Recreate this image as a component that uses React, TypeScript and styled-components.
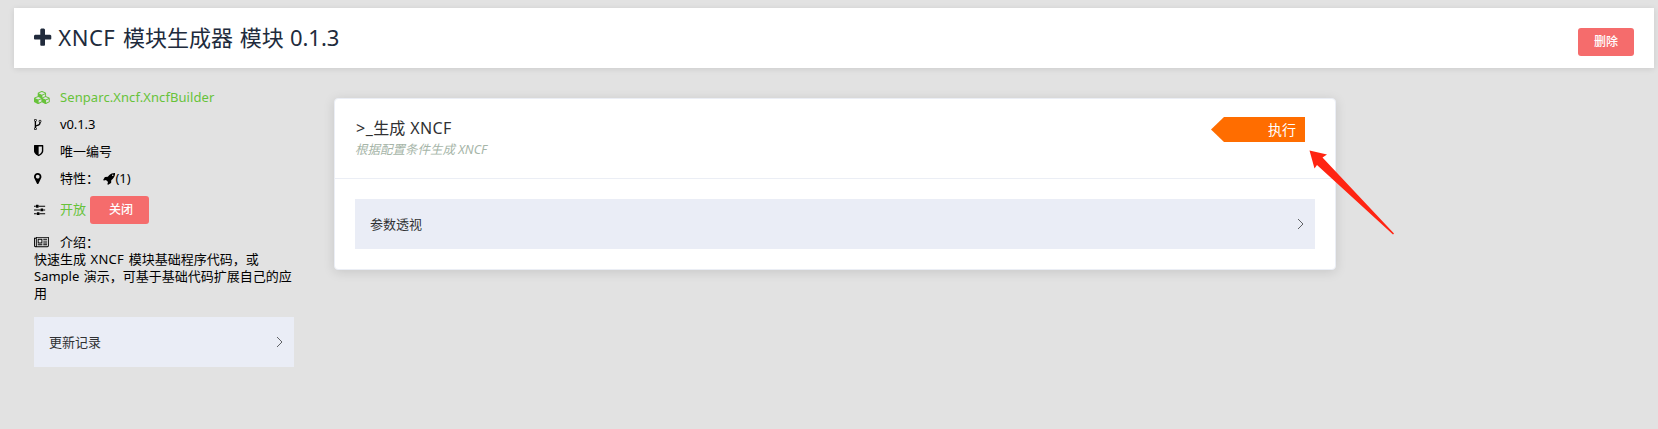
import React from "react";
import styled, { createGlobalStyle } from "styled-components";

const GlobalStyle = createGlobalStyle`
  * { box-sizing: border-box; }
  body {
    margin: 0;
    background: #e2e2e2;
    color: #000;
    font: 13px/17px "Noto Sans", "Noto Sans CJK SC", sans-serif;
  }
`;

const Page = styled.div`
  min-height: 429px;
  padding: 8px 4px 0 14px;
  overflow: hidden;
`;

const Header = styled.header`
  display: flex;
  justify-content: space-between;
  height: 60px;
  padding: 0 20px;
  background: #fff;
  box-shadow: 0 1px 6px rgba(0, 0, 0, 0.1);
`;

const Title = styled.h1`
  display: flex;
  align-items: center;
  gap: 7px;
  height: 58px;
  margin: 0;
  color: #212b3c;
  font-size: 22px;
  line-height: 30px;
  font-weight: 400;
  white-space: pre;
  word-spacing: 1px;

  svg {
    margin-top: 2px;
  }
`;

const Latin = styled.span<{ $track: number; $gap?: number }>`
  letter-spacing: ${(p) => p.$track}px;
  word-spacing: ${(p) => p.$gap ?? 0}px;
`;

const Button = styled.button<{ $pad: string }>`
  height: 28px;
  padding: ${(p) => p.$pad};
  border: 0;
  border-radius: 3px;
  background: #f56c6c;
  color: #fff;
  font: 500 12px/26px "Noto Sans", "Noto Sans CJK SC", sans-serif;
`;

const DeleteButton = styled(Button)`
  margin-top: 20px;
`;

const Body = styled.div`
  display: flex;
  align-items: flex-start;
  gap: 40px;
  padding: 16px 20px 0;
`;

const Sidebar = styled.aside`
  width: 260px;
`;

const InfoRow = styled.div<{ $green?: boolean; $height?: number; $align?: string }>`
  display: flex;
  align-items: ${(p) => p.$align ?? "center"};
  height: ${(p) => p.$height ?? 27}px;
  color: ${(p) => (p.$green ? "#67c23a" : "#000")};
  white-space: pre;
`;

const IconSlot = styled.span`
  display: flex;
  align-items: center;
  flex: none;
  width: 26px;
  height: 17px;
`;

const State = styled.span`
  width: 30px;
  color: #67c23a;
`;

const Description = styled.p`
  margin: 0 0 15px;
  white-space: nowrap;
`;

const Collapse = styled.div`
  display: flex;
  align-items: center;
  justify-content: space-between;
  height: 50px;
  padding: 0 11px 0 15px;
  background: #eaedf6;
  color: #303133;
`;

const Card = styled.section`
  width: 1002px;
  height: 172px;
  margin-top: 14px;
  border: 1px solid #ebeef5;
  border-radius: 4px;
  background: #fff;
  box-shadow: 0 2px 12px rgba(0, 0, 0, 0.12);
`;

const CardHeader = styled.div`
  display: flex;
  justify-content: space-between;
  height: 80px;
  padding: 18px 30px 0 20px;
  border-bottom: 1px solid #ebeef5;
`;

const CardTitle = styled.div`
  padding-left: 1px;
  color: #303133;
  font-size: 16px;
  line-height: 23px;
`;

const Hint = styled.div`
  color: #a6b5a8;
  font-size: 12.5px;
  line-height: 20px;
  font-style: italic;
`;

const CardBody = styled.div`
  padding: 20px;
`;

const RunTag = styled.div`
  width: 94px;
  height: 25px;
  padding-right: 9px;
  background: #ff6d00;
  clip-path: polygon(0 50%, 13px 0, 100% 0, 100% 100%, 13px 100%);
  color: #fff;
  font-size: 14px;
  line-height: 25px;
  text-align: right;
`;

const Pointer = styled.svg`
  position: absolute;
  left: 1308px;
  top: 149px;
`;

const glyphs = {
  plus: { w: 1408, d: "M1408 736v192q0 40-28 68t-68 28h-416v416q0 40-28 68t-68 28h-192q-40 0-68-28t-28-68v-416h-416q-40 0-68-28t-28-68v-192q0-40 28-68t68-28h416v-416q0-40 28-68t68-28h192q40 0 68 28t28 68v416h416q40 0 68 28t28 68z" },
  cubes: { w: 2304, d: "M640 1632l384-192v-314l-384 164v342zm-64-454l404-173-404-173-404 173zm1088 454l384-192v-314l-384 164v342zm-64-454l404-173-404-173-404 173zm-448-293l384-165v-266l-384 164v267zm-64-379l441-189-441-189-441 189zm1088 518v416q0 36-19 67t-52 47l-448 224q-25 14-57 14t-57-14l-448-224q-4-2-7-4-2 2-7 4l-448 224q-25 14-57 14t-57-14l-448-224q-33-16-52-47t-19-67v-416q0-38 21.5-70t56.5-48l434-186v-400q0-38 21.5-70t56.5-48l448-192q23-10 50-10t50 10l448 192q35 16 56.5 48t21.5 70v400l434 186q36 16 57 48t21 70z" },
  fork: { w: 1024, d: "M288 1472q0-40-28-68t-68-28-68 28-28 68 28 68 68 28 68-28 28-68zm0-1152q0-40-28-68t-68-28-68 28-28 68 28 68 68 28 68-28 28-68zm640 128q0-40-28-68t-68-28-68 28-28 68 28 68 68 28 68-28 28-68zm96 0q0 52-26 96.5t-70 69.5q-2 287-226 414-67 38-203 81-128 40-169.5 71t-41.5 100v26q44 25 70 69.5t26 96.5q0 80-56 136t-136 56-136-56-56-136q0-52 26-96.5t70-69.5v-820q-44-25-70-69.5t-26-96.5q0-80 56-136t136-56 136 56 56 136q0 52-26 96.5t-70 69.5v497q54-26 154-57 55-17 87.5-29.5t70.5-31 59-39.5 40.5-51 28-69.5 8.5-91.5q-44-25-70-69.5t-26-96.5q0-80 56-136t136-56 136 56 56 136z" },
  shield: { w: 1280, d: "M1088 832v-640h-448v1137q119-63 213-137 235-184 235-360zm192-768v768q0 86-33.5 170.5t-83 150-118 127.5-126.5 103-121 77.5-89.5 49.5-42.5 20q-12 6-26 6t-26-6q-16-7-42.5-20t-89.5-49.5-121-77.5-126.5-103-118-127.5-83-150-33.5-170.5v-768q0-26 19-45t45-19h1152q26 0 45 19t19 45z" },
  marker: { w: 1024, d: "M768 640q0-106-75-181t-181-75-181 75-75 181 75 181 181 75 181-75 75-181zm256 0q0 109-33 179l-364 774q-16 33-47.5 52t-67.5 19-67.5-19-46.5-52l-365-774q-33-70-33-179 0-212 150-362t362-150 362 150 150 362z" },
  rocket: { w: 1664, d: "M1440 448q0-40-28-68t-68-28-68 28-28 68 28 68 68 28 68-28 28-68zm224-288q0 249-75.5 430.5t-253.5 360.5q-81 80-195 176l-20 379q-2 16-16 26l-384 224q-7 4-16 4-12 0-23-9l-64-64q-13-14-8-32l85-276-281-281-276 85q-3 1-9 1-14 0-23-9l-64-64q-17-19-5-39l224-384q10-14 26-16l379-20q96-114 176-195 188-187 358-258t431-71q14 0 24 9.5t10 22.5z" },
  sliders: { w: 1536, d: "M352 1408v128h-352v-128h352zm352-128q26 0 45 19t19 45v256q0 26-19 45t-45 19h-256q-26 0-45-19t-19-45v-256q0-26 19-45t45-19h256zm160-384v128h-864v-128h864zm-640-512v128h-224v-128h224zm1312 1024v128h-736v-128h736zm-960-1152q26 0 45 19t19 45v256q0 26-19 45t-45 19h-256q-26 0-45-19t-19-45v-256q0-26 19-45t45-19h256zm640 512q26 0 45 19t19 45v256q0 26-19 45t-45 19h-256q-26 0-45-19t-19-45v-256q0-26 19-45t45-19h256zm320 128v128h-224v-128h224zm0-512v128h-864v-128h864z" },
  news: { w: 2048, d: "M1024 512h-384v384h384v-384zm128 640v128h-640v-128h640zm0-768v640h-640v-640h640zm640 768v128h-512v-128h512zm0-256v128h-512v-128h512zm0-256v128h-512v-128h512zm0-256v128h-512v-128h512zm-1536 960v-960h-128v960q0 26 19 45t45 19 45-19 19-45zm1664 0v-1088h-1536v1088q0 33-11 64h1483q26 0 45-19t19-45zm128-1216v1216q0 80-56 136t-136 56h-1664q-80 0-136-56t-56-136v-1088h256v-128h1792z" },
};

function Glyph({ name, size = 13 }: { name: keyof typeof glyphs; size?: number }) {
  const { w, d } = glyphs[name];
  return (
    <svg width={(w / 1792) * size} height={size} viewBox={`0 0 ${w} 1792`} fill="currentColor" overflow="visible">
      <path d={d} />
    </svg>
  );
}

function Chevron() {
  return (
    <svg width="7" height="12" viewBox="0 0 7 12" fill="none" stroke="#606266" strokeWidth="1">
      <path d="M1 1l5 5-5 5" />
    </svg>
  );
}

export default function App() {
  return (
    <Page>
      <GlobalStyle />
      <Header>
        <Title>
          <Glyph name="plus" size={22} />
          <span>
            <Latin $track={0.5} $gap={1.5}>XNCF </Latin>模块生成器 模块<Latin $track={0} $gap={0.5}> 0.1.3</Latin>
          </span>
        </Title>
        <DeleteButton $pad="0 16px">删除</DeleteButton>
      </Header>
      <Body>
        <Sidebar>
          <InfoRow $green>
            <IconSlot><Glyph name="cubes" /></IconSlot>
            <Latin $track={0.08}>Senparc.Xncf.XncfBuilder</Latin>
          </InfoRow>
          <InfoRow>
            <IconSlot><Glyph name="fork" /></IconSlot>
            <Latin $track={-0.1}>v0.1.3</Latin>
          </InfoRow>
          <InfoRow>
            <IconSlot><Glyph name="shield" /></IconSlot>
            唯一编号
          </InfoRow>
          <InfoRow $height={26}>
            <IconSlot><Glyph name="marker" /></IconSlot>
            <Latin $track={0} $gap={1}>特性： </Latin><Glyph name="rocket" />(1)
          </InfoRow>
          <InfoRow $height={37}>
            <IconSlot><Glyph name="sliders" /></IconSlot>
            <State>开放</State>
            <Button $pad="0 16px 0 19px">关闭</Button>
          </InfoRow>
          <InfoRow $height={23} $align="flex-end">
            <IconSlot><Glyph name="news" /></IconSlot>
            介绍：
          </InfoRow>
          <Description>
            快速生成<Latin $track={0.3} $gap={0.8}> XNCF </Latin>模块基础程序代码，或<br />
            <Latin $track={0} $gap={1}>Sample </Latin>演示，可基于基础代码扩展自己的应<br />用
          </Description>
          <Collapse>更新记录<Chevron /></Collapse>
        </Sidebar>
        <Card>
          <CardHeader>
            <div>
              <CardTitle><Latin $track={0.5}>&gt;_</Latin>生成<Latin $track={0.3} $gap={0.6}> XNCF</Latin></CardTitle>
              <Hint>根据配置条件生成 XNCF</Hint>
            </div>
            <RunTag>执行</RunTag>
          </CardHeader>
          <CardBody>
            <Collapse>参数透视<Chevron /></Collapse>
          </CardBody>
        </Card>
      </Body>
      <Pointer width="88" height="88" viewBox="0 0 88 88" fill="#ff2412">
        <path d="M1.5 1.5L19 5.5L14.5 8.5L86 84.5L85 85.5L9 16L6.5 19.5Z" />
      </Pointer>
    </Page>
  );
}
